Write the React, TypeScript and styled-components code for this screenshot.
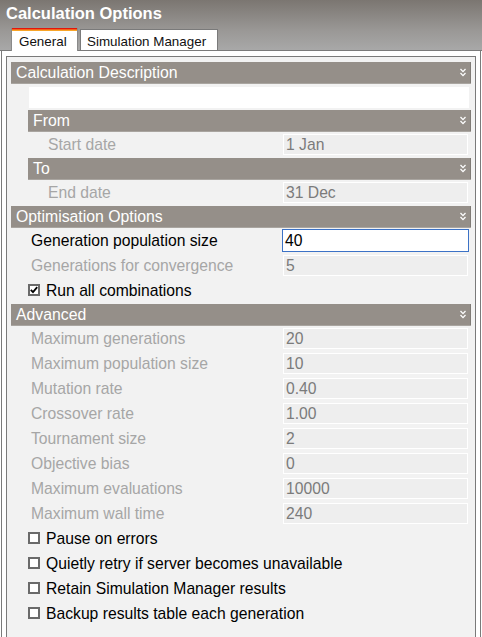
import React from "react";
import styled, { createGlobalStyle, css } from "styled-components";

const GlobalStyle = createGlobalStyle`
  html, body { margin: 0; padding: 0; background: #fff; }
  body { font-family: "Liberation Sans", Arial, sans-serif; }
  * { box-sizing: border-box; }
`;

const Window = styled.div`
  width: 482px;
  height: 637px;
  overflow: hidden;
  display: flex;
  flex-direction: column;
  background: #fff;
`;

const TitleBar = styled.div`
  height: 51px;
  flex: none;
  display: flex;
  flex-direction: column;
  background: linear-gradient(to bottom, #7b7671 0%, #9a9896 60%, #a9a9a9 100%);
`;

const Title = styled.div`
  padding: 3px 0 0 6px;
  line-height: 20px;
  font-size: 16.5px;
  font-weight: bold;
  color: #fff;
`;

const TabStrip = styled.div`
  margin-top: auto;
  height: 23px;
  display: flex;
  align-items: flex-start;
  padding-left: 11px;
  box-shadow: inset 0 -1px 0 #7a7a7a;
`;

const Tab = styled.div<{ $active?: boolean }>`
  font-size: 13.4px;
  line-height: 15px;
  color: #111;
  white-space: nowrap;
  ${(p) =>
    p.$active
      ? css`
          width: 67px;
          height: 23px;
          padding: 6px 0 0 7px;
          border-left: 1px solid #8a8a8a;
          border-right: 1px solid #8a8a8a;
          background: linear-gradient(
            to bottom,
            #e3150c 0px,
            #e3150c 1px,
            #f2641a 1px,
            #f2641a 2px,
            #f8a528 2px,
            #f8a528 3px,
            #ffffff 3px
          );
        `
      : css`
          margin: 1px 0 0 2px;
          width: 138px;
          height: 22px;
          padding: 4px 0 0 6px;
          border: 1px solid #7a7a7a;
          background: #fff;
        `}
`;

const Panel = styled.div`
  flex: 1;
  margin-left: 1px;
  width: 480px;
  border-left: 1px solid #7a7a7a;
  border-right: 1px solid #7a7a7a;
  padding: 5px 4px 0 4px;
  display: flex;
  flex-direction: column;
  background: #fff;
`;

const Inner = styled.div`
  flex: 1;
  border: 1px solid #7a7a7a;
  border-bottom: none;
  background: #f2f2f2;
  padding: 5px 4px 0 4px;
  display: flex;
  flex-direction: column;
`;

const SectionHeader = styled.div<{ $nested?: boolean }>`
  flex: none;
  height: 22px;
  margin: 0 0 2px ${(p) => (p.$nested ? "17px" : "0")};
  padding: 0 5px 0 5px;
  background: #958f89;
  border-bottom: 1px solid #a9a5a0;
  box-shadow: inset -1px 0 0 #7f7b76;
  color: #fff;
  font-size: 15.8px;
  line-height: 21px;
  display: flex;
  align-items: center;
  justify-content: space-between;
`;

const DescInput = styled.div`
  flex: none;
  height: 21px;
  margin: 1px 2px 2px 18px;
  background: #fff;
`;

const Row = styled.div<{ $indent: number; $h: number }>`
  flex: none;
  height: ${(p) => p.$h}px;
  padding-left: ${(p) => p.$indent}px;
  display: flex;
  align-items: flex-start;
`;

const Label = styled.div<{ $disabled?: boolean }>`
  flex: 1;
  font-size: 15.7px;
  line-height: 21px;
  white-space: nowrap;
  color: ${(p) => (p.$disabled ? "#a6a6a6" : "#000")};
`;

const Field = styled.div<{ $focused?: boolean }>`
  flex: none;
  font-size: 15.7px;
  white-space: nowrap;
  padding-left: 2px;
  ${(p) =>
    p.$focused
      ? css`
          width: 187px;
          height: 23px;
          margin: -1px 2px 0 -1px;
          border: 1px solid #3c72c6;
          background: #fff;
          color: #000;
          line-height: 21px;
        `
      : css`
          width: 185px;
          height: 21px;
          margin-right: 3px;
          border: 1px solid #fff;
          background: #eeeeee;
          color: #7b7b7b;
          line-height: 19px;
        `}
`;

const Box = styled.div`
  flex: none;
  width: 12px;
  height: 12px;
  margin: 4px 6px 0 0;
  border: 2px solid #6a6a6a;
  background: #fff;
  display: flex;
  align-items: center;
  justify-content: center;
`;

const Chevron = () => (
  <svg width="6" height="9" viewBox="0 0 6 9" fill="none" stroke="#fff" strokeWidth="1.3">
    <path d="M0.5 1 L3 3.6 L5.5 1" />
    <path d="M0.5 5 L3 7.6 L5.5 5" />
  </svg>
);

const Header = ({ text, nested }: { text: string; nested?: boolean }) => (
  <SectionHeader $nested={nested}>
    <span>{text}</span>
    <Chevron />
  </SectionHeader>
);

const FieldRow = ({
  label,
  value,
  indent = 20,
  h = 24,
  disabled = true,
  focused = false,
}: {
  label: string;
  value: string;
  indent?: number;
  h?: number;
  disabled?: boolean;
  focused?: boolean;
}) => (
  <Row $indent={indent} $h={h}>
    <Label $disabled={disabled}>{label}</Label>
    <Field $focused={focused}>{value}</Field>
  </Row>
);

const CheckRow = ({ label, checked, h = 25 }: { label: string; checked?: boolean; h?: number }) => (
  <Row $indent={17} $h={h}>
    <Box>
      {checked && (
        <svg width="8" height="8" viewBox="0 0 8 8" fill="none" stroke="#000" strokeWidth="1.8">
          <path d="M0.8 3.8 L3 6.2 L7.2 1.2" />
        </svg>
      )}
    </Box>
    <Label>{label}</Label>
  </Row>
);

const advanced: [string, string][] = [
  ["Maximum generations", "20"],
  ["Maximum population size", "10"],
  ["Mutation rate", "0.40"],
  ["Crossover rate", "1.00"],
  ["Tournament size", "2"],
  ["Objective bias", "0"],
  ["Maximum evaluations", "10000"],
  ["Maximum wall time", "240"],
];

const options = [
  "Pause on errors",
  "Quietly retry if server becomes unavailable",
  "Retain Simulation Manager results",
  "Backup results table each generation",
];

export default function App() {
  return (
    <Window>
      <GlobalStyle />
      <TitleBar>
        <Title>Calculation Options</Title>
        <TabStrip>
          <Tab $active>General</Tab>
          <Tab>Simulation Manager</Tab>
        </TabStrip>
      </TitleBar>
      <Panel>
        <Inner>
          <Header text="Calculation Description" />
          <DescInput />
          <Header text="From" nested />
          <FieldRow label="Start date" value="1 Jan" indent={37} />
          <Header text="To" nested />
          <FieldRow label="End date" value="31 Dec" indent={37} />
          <Header text="Optimisation Options" />
          <FieldRow label="Generation population size" value="40" disabled={false} focused h={25} />
          <FieldRow label="Generations for convergence" value="5" h={25} />
          <CheckRow label="Run all combinations" checked h={24} />
          <Header text="Advanced" />
          {advanced.map(([l, v]) => (
            <FieldRow key={l} label={l} value={v} h={25} />
          ))}
          {options.map((o) => (
            <CheckRow key={o} label={o} />
          ))}
        </Inner>
      </Panel>
    </Window>
  );
}
